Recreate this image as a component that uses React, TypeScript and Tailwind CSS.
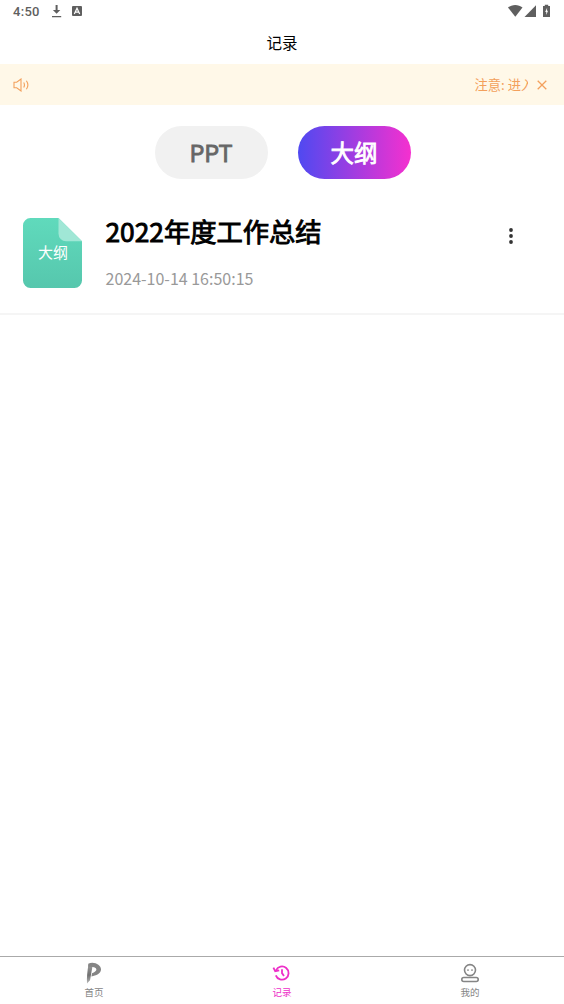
import { useState } from "react";

const NAV_ITEMS = [
  { key: "home", label: "首页", Icon: HomeIcon },
  { key: "records", label: "记录", Icon: HistoryIcon },
  { key: "mine", label: "我的", Icon: MineIcon },
];

const RECORDS = [{ id: 1, title: "2022年度工作总结", time: "2024-10-14 16:50:15" }];

function HomeIcon() {
  return (
    <svg viewBox="0 0 20 22" className="w-5 h-[22px]">
      <defs>
        <linearGradient id="stem" x1="0" y1="0" x2="0" y2="1">
          <stop offset="0" stopColor="#999" />
          <stop offset="0.55" stopColor="#707070" />
          <stop offset="1" stopColor="#bbb" />
        </linearGradient>
      </defs>
      <path d="M4.4 3 8.5 4.2C7.5 9.5 6.8 14.5 6 18.2L3 21.5C2.6 15.5 3.4 9 4.4 3Z" fill="url(#stem)" />
      <path d="M4.2 1.8C10-1 17.2 3 17 7.4c-.2 4-4.8 6-9.6 7l.6-3.2c2.6-.8 4.6-2.2 4.4-3.8C12.2 5.4 9.4 4.4 4.2 4.8Z" fill="#858585" />
    </svg>
  );
}

function HistoryIcon() {
  return (
    <svg viewBox="0 0 20 22" className="w-5 h-[22px]" fill="none" stroke="currentColor" strokeWidth="1.8">
      <path d="M4 8.3A6.6 6.6 0 1 1 3.8 13.4" />
      <path d="m1.4 5.6 1.8 3.6 4-.9" />
      <path d="M10 7.3v3.8l2 2.8" />
    </svg>
  );
}

function MineIcon() {
  return (
    <svg viewBox="0 0 20 22" className="w-5 h-[22px]" fill="none" stroke="currentColor" strokeWidth="1.6">
      <circle cx="10" cy="8.1" r="5.5" />
      <path d="M8 7.2v1.8M12 7.2v1.8" strokeWidth="1.3" />
      <rect x="1.8" y="15.5" width="16.4" height="4" rx="2" />
    </svg>
  );
}

function StatusBar() {
  return (
    <div className="h-[22px] pl-[13px] pr-[13px] flex items-center justify-between text-[#5f5f5f]">
      <div className="flex items-center">
        <span className="w-[38px] font-['Roboto',sans-serif] text-[13px] leading-none font-medium tracking-[0.3px]">4:50</span>
        <svg viewBox="0 0 11 14" className="w-[11px] h-3.5" fill="currentColor">
          <path d="M4.6 1h2v5h2.7L5.6 9.8 1.9 6h2.7ZM1 12h9.2v1.3H1Z" />
        </svg>
        <svg viewBox="0 0 10 10" className="ml-2.5 w-2.5 h-2.5">
          <rect width="10" height="10" rx="1" fill="currentColor" />
          <path d="M2.3 8 5 2.2 7.7 8M3.5 6.2h3" fill="none" stroke="#fff" strokeWidth="1.2" />
        </svg>
      </div>
      <svg viewBox="0 0 44 14" className="w-11 h-3.5" fill="currentColor">
        <path d="M1 3.5C5 .1 11.5.1 15.5 3.5L8.3 12.8Z" />
        <path d="M17.5 13 29 1.3V13Z" />
        <path d="M36 2h1.8V.7h3.4V2H43v11h-7Z" />
        <path d="M40.1 3.8 38.2 8h1.1v3L41 6.8h-1Z" fill="#fff" />
      </svg>
    </div>
  );
}

function NoticeBar({ onClose }: { onClose: () => void }) {
  return (
    <div className="h-[41px] bg-[#fff8e8] text-[#f3a05c] flex items-center pl-[13px] pr-4">
      <svg viewBox="0 0 17 14" className="w-[17px] h-3.5 flex-shrink-0" fill="none" stroke="currentColor" strokeWidth="1.1">
        <path d="M1 4.2h2.7L8 1v12L3.7 9.8H1Z" />
        <path d="M10.7 4.5q1.5 2.5 0 5M13.4 2.7q3 4.3 0 8.6" />
      </svg>
      <div className="ml-[444.5px] w-[53px] overflow-hidden whitespace-nowrap text-[13.3px] leading-5 pt-px">注意: 进入</div>
      <button onClick={onClose} className="ml-auto cursor-pointer">
        <svg viewBox="0 0 12 12" className="w-3 h-3" fill="none" stroke="currentColor" strokeWidth="1.3">
          <path d="m1.7 1.7 8.6 8.6m0-8.6-8.6 8.6" />
        </svg>
      </button>
    </div>
  );
}

function FileIcon() {
  return (
    <div className="w-[59px] h-[71px] flex-shrink-0 grid place-items-center">
      <svg viewBox="0 0 59 71" className="w-[59px] h-[71px] [grid-area:1/1]">
        <defs>
          <linearGradient id="sheet" x1="0" y1="0" x2="0" y2="1">
            <stop offset="0" stopColor="#60dabc" />
            <stop offset="1" stopColor="#56c7ad" />
          </linearGradient>
        </defs>
        <path d="M7.5 0H35.5L59 23.2V62.5a7.5 7.5 0 0 1-7.5 7.5h-44A7.5 7.5 0 0 1 0 62.5V7.5A7.5 7.5 0 0 1 7.5 0Z" fill="url(#sheet)" />
        <path d="M35.5 0 59 23.2H43a7.5 7.5 0 0 1-7.5-7.5Z" fill="#a0e7d6" />
      </svg>
      <span className="[grid-area:1/1] text-white text-[15px] leading-none pl-0.5 pb-1">大纲</span>
    </div>
  );
}

export default function App() {
  const [tab, setTab] = useState("outline");
  const [nav, setNav] = useState("records");
  const [showNotice, setShowNotice] = useState(true);

  const tabCls = "w-[113px] h-[53px] rounded-full text-[23.5px] leading-none [-webkit-text-stroke:0.8px_currentColor] pt-px cursor-pointer";
  const activeCls = "bg-linear-to-r/srgb from-[#4f49f1] to-[#f530cf] text-white";
  const idleCls = "bg-[#f1f1f1] text-[#666]";

  return (
    <div className="h-screen flex flex-col bg-white text-black font-['Noto_Sans_CJK_SC',sans-serif]">
      <StatusBar />
      <header className="h-[42px] flex items-center justify-center text-[15.5px] leading-none">记录</header>
      {showNotice && <NoticeBar onClose={() => setShowNotice(false)} />}

      <main className="flex-1 min-h-0">
        <div className="flex justify-center gap-[30px] pt-[21px] pl-px">
          <button onClick={() => setTab("ppt")} className={`${tabCls} ${tab === "ppt" ? activeCls : idleCls}`}>PPT</button>
          <button onClick={() => setTab("outline")} className={`${tabCls} ${tab === "outline" ? activeCls : idleCls}`}>大纲</button>
        </div>

        <ul className="mt-[19px]">
          {RECORDS.map(record => (
            <li key={record.id} className="h-[117px] flex items-start pt-5 pl-[22.5px] pr-12 border-b-2 border-[#f5f5f5]">
              <FileIcon />
              <div className="flex-1 ml-6">
                <h2 className="-mt-0.5 text-[26.3px] leading-[30px] [-webkit-text-stroke:0.9px_currentColor]">{record.title}</h2>
                <p className="mt-[22px] text-base leading-5 text-[#999]">{record.time}</p>
              </div>
              <button className="mt-2.5 w-[7px] cursor-pointer">
                <svg viewBox="0 0 4 16" className="w-1 h-4" fill="#333">
                  <circle cx="2" cy="2" r="1.9" />
                  <circle cx="2" cy="8" r="1.9" />
                  <circle cx="2" cy="14" r="1.9" />
                </svg>
              </button>
            </li>
          ))}
        </ul>
      </main>

      <nav className="h-12 flex border-t border-[#aaa]">
        {NAV_ITEMS.map(({ key, label, Icon }) => (
          <button
            key={key}
            onClick={() => setNav(key)}
            className={`flex-1 flex flex-col items-center pt-[5px] cursor-pointer ${nav === key ? "text-[#ed2fc8]" : "text-[#858585]"}`}
          >
            <Icon />
            <span className="mt-0.5 text-[9.5px] leading-3">{label}</span>
          </button>
        ))}
      </nav>
    </div>
  );
}
